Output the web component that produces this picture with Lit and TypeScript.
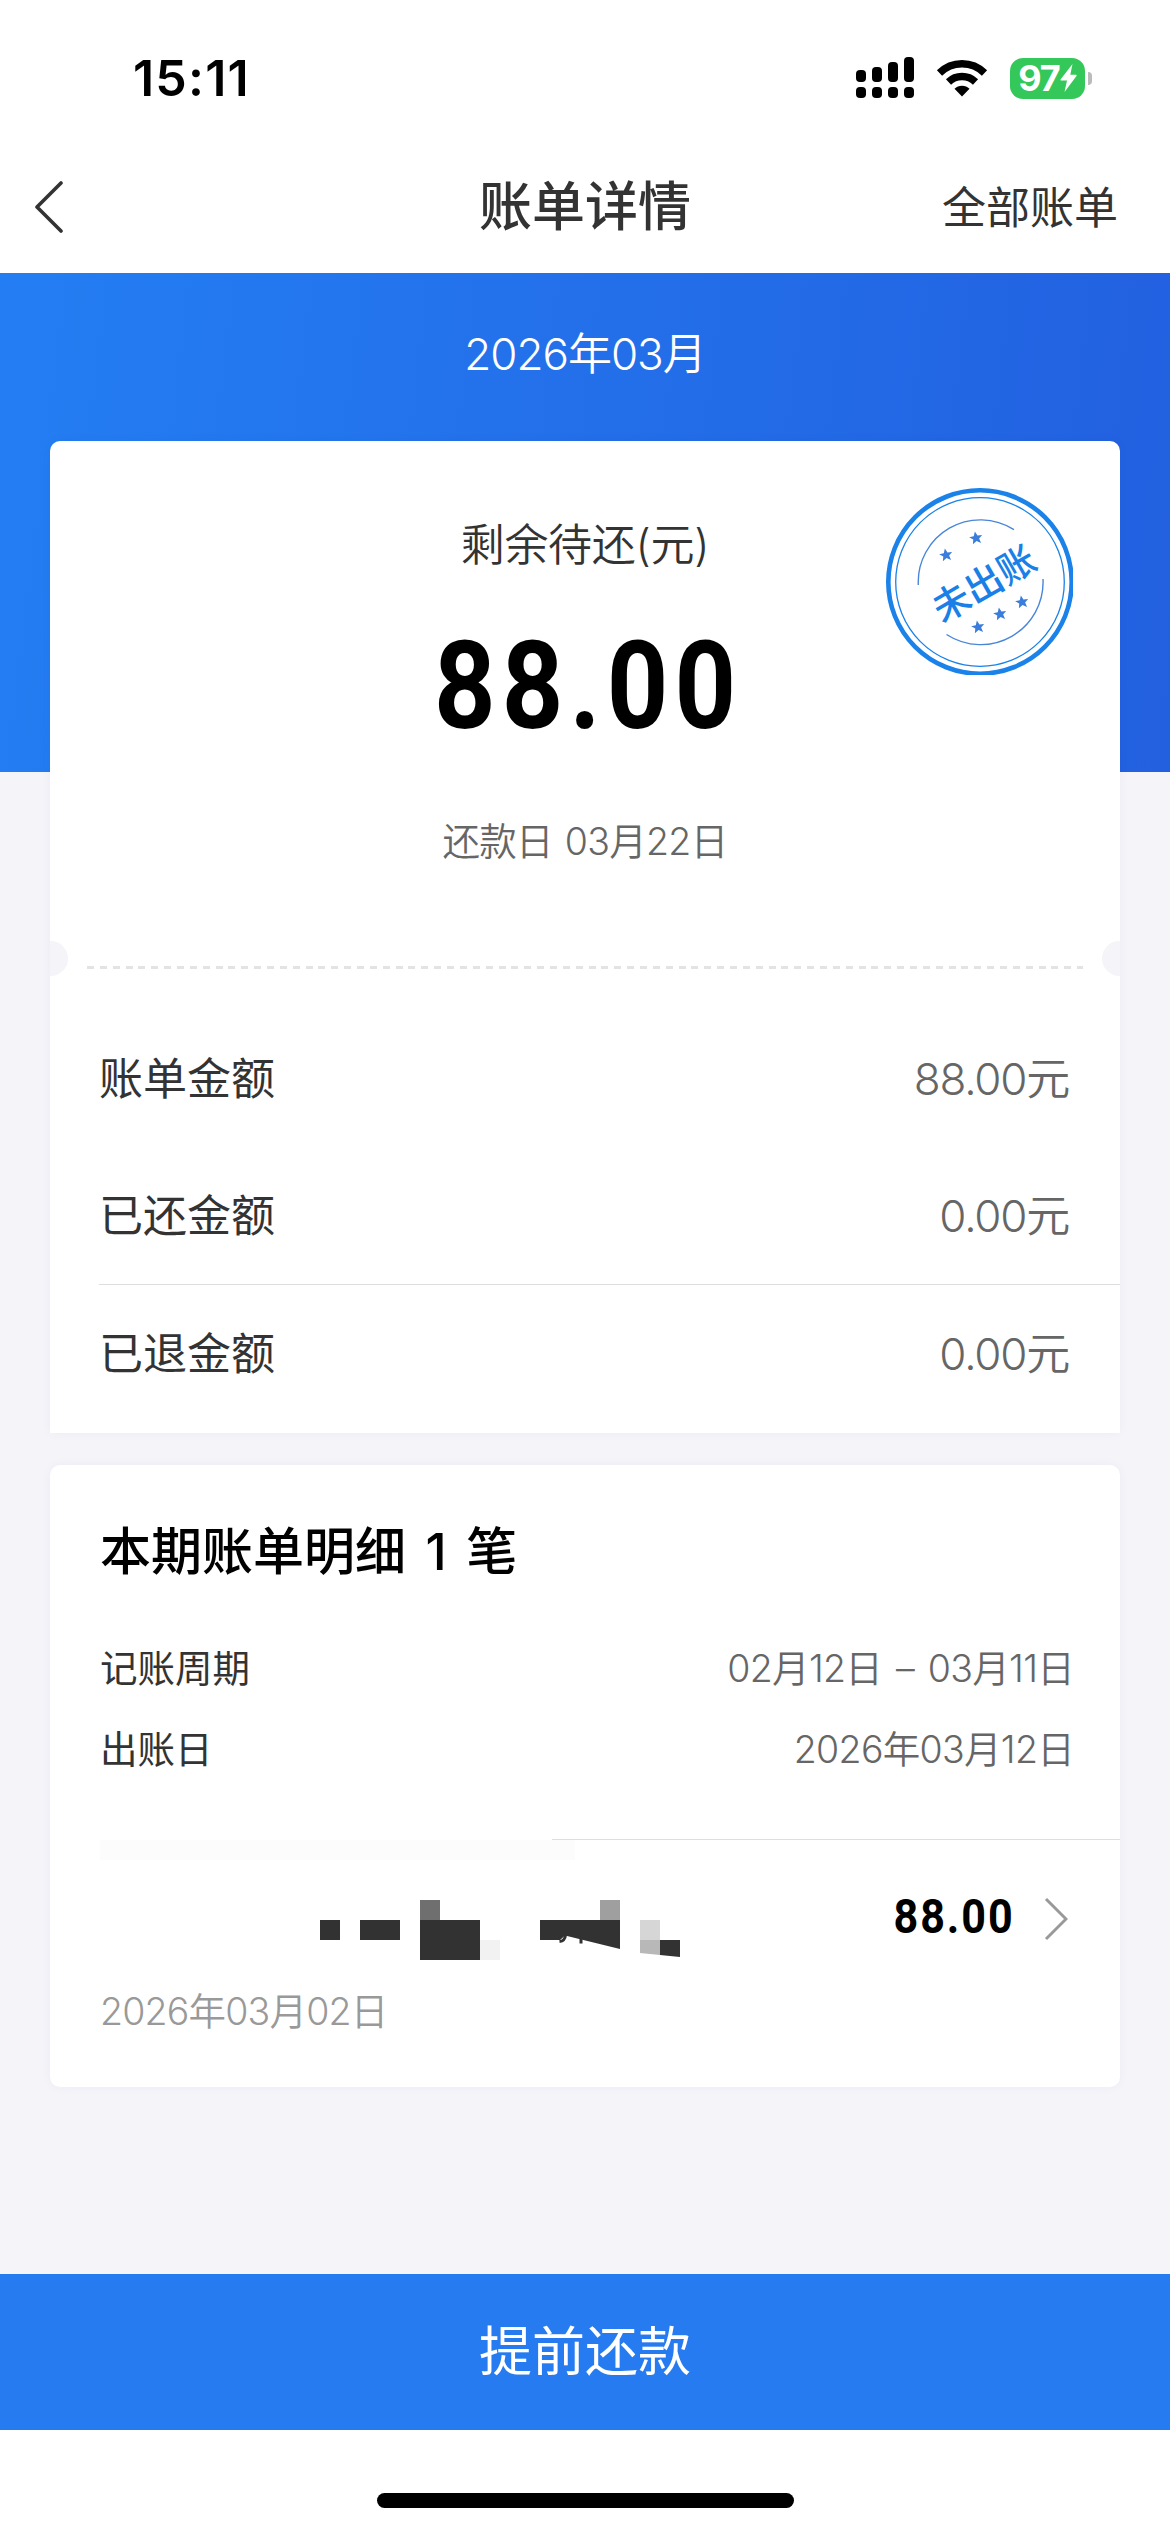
import { LitElement, html, css, svg } from 'lit';
import { customElement } from 'lit/decorators.js';

const STAR =
  'M0 -6 L1.7 -2 L6 -1.8 L2.7 1 L3.8 5.2 L0 2.8 L-3.8 5.2 L-2.7 1 L-6 -1.8 L-1.7 -2 Z';

const stars = [
  [86, 95],
  [116, 78],
  [118, 167],
  [140, 154],
  [162, 142],
];

@customElement('status-bar')
export class StatusBar extends LitElement {
  static styles = css`
    :host {
      display: flex;
      justify-content: space-between;
      align-items: center;
      height: 156px;
      padding: 0 78px 0 133px;
      box-sizing: border-box;
    }

    .time {
      font-size: 50px;
      font-weight: 600;
      letter-spacing: 1.2px;
      color: #000;
    }

    .icons {
      display: flex;
      align-items: center;
    }

    .wifi {
      margin: 0 22px 0 22px;
    }

    .battery {
      display: flex;
      align-items: center;
      justify-content: center;
      width: 75px;
      height: 41px;
      border-radius: 13px;
      background: #34c759;
      color: #fff;
      font-size: 36px;
      font-weight: 700;
      letter-spacing: -1px;
    }

    .cap {
      width: 4px;
      height: 13px;
      margin-left: 3px;
      border-radius: 0 5px 5px 0;
      background: #b9bcb9;
    }
  `;

  render() {
    return html`
      <span class="time">15:11</span>
      <div class="icons">
        <svg width="58" height="42" viewBox="0 0 58 42">
          <rect x="0" y="13" width="10" height="12" rx="4" />
          <rect x="16" y="10" width="10" height="15" rx="4" />
          <rect x="32" y="5" width="10" height="20" rx="4" />
          <rect x="48" y="0" width="10" height="25" rx="4" />
          <rect x="0" y="30" width="10" height="11" rx="4" />
          <rect x="16" y="30" width="10" height="11" rx="4" />
          <rect x="32" y="30" width="10" height="11" rx="4" />
          <rect x="48" y="30" width="10" height="11" rx="4" />
        </svg>
        <svg class="wifi" width="52" height="38" viewBox="0 0 52 38">
          <path
            d="M3.5 14 A32 32 0 0 1 48.5 14 M12.5 23 A19.5 19.5 0 0 1 39.5 23"
            fill="none"
            stroke="#000"
            stroke-width="7.4"
          />
          <path d="M26 37.5 L18.5 29.8 A10.6 10.6 0 0 1 33.5 29.8 Z" />
        </svg>
        <div class="battery">
          <span>97</span>
          <svg width="17" height="28" viewBox="0 0 17 28">
            <path
              d="M12.5 0 L0.5 15.5 Q0 16.6 1.2 16.6 L7 16.6 L4.5 28 L16.5 12 Q17 10.8 15.8 10.8 L10.3 10.8 Z"
              fill="#fff"
            />
          </svg>
        </div>
        <div class="cap"></div>
      </div>
    `;
  }
}

@customElement('bill-stamp')
export class BillStamp extends LitElement {
  static styles = css`
    :host {
      display: block;
    }

    svg {
      display: block;
    }

    text {
      font-family: 'Noto Sans CJK SC', sans-serif;
      font-size: 37.5px;
      font-weight: 500;
    }
  `;

  render() {
    return html`
      <svg width="187" height="187" viewBox="26 28 187 187">
        <g fill="none" stroke="#1a82e8">
          <circle cx="120" cy="122" r="91.7" stroke-width="4.6" />
          <circle cx="120" cy="122" r="84.3" stroke-width="1.3" />
          <path
            d="M58.3 125 A62.2 62.2 0 0 1 154 69.7 M183 119 A62.5 62.5 0 0 1 86.5 174.5"
            stroke="#4a86d8"
            stroke-width="1.4"
          />
        </g>
        <g fill="#3a7ddc">
          ${stars.map(
            ([x, y]) =>
              svg`<path d=${STAR} transform="translate(${x} ${y}) rotate(-10) scale(1.1)" />`
          )}
        </g>
        <text
          x="122.5"
          y="121"
          fill="#1a7fe6"
          text-anchor="middle"
          dominant-baseline="central"
          transform="rotate(-30 122.5 121)"
        >未出账</text>
      </svg>
    `;
  }
}

@customElement('app-root')
export class AppRoot extends LitElement {
  static styles = css`
    :host {
      display: flex;
      flex-direction: column;
      width: 1170px;
      height: 2532px;
      overflow: hidden;
      background: #fff;
      color: #333;
      font-family: Inter, 'Noto Sans CJK SC', sans-serif;
      font-size: 44px;
      line-height: 1;
    }

    .nav {
      display: grid;
      grid-template-columns: 1fr auto 1fr;
      align-items: center;
      height: 117px;
      padding: 0 52px 14px 34px;
      box-sizing: border-box;
    }

    .nav h1 {
      margin: 0 0 0 18px;
      font-size: 53px;
      font-weight: 500;
    }

    .nav .all {
      justify-self: end;
    }

    .main {
      height: 2001px;
      box-sizing: border-box;
      padding: 0 50px;
      background:
        linear-gradient(97deg, #247ef3, #2260e0) 0 0 / 100% 499px no-repeat,
        #f4f4f9;
    }

    .month {
      height: 168px;
      line-height: 162px;
      text-align: center;
      font-weight: 350;
      letter-spacing: -1px;
      color: #fff;
    }

    .card {
      background: #fff;
      box-shadow: 0 0 12px rgba(60, 60, 110, 0.04);
    }

    .summary {
      position: relative;
      display: flex;
      flex-direction: column;
      height: 992px;
      border-radius: 10px 10px 0 0;
    }

    .notch {
      position: absolute;
      top: 500px;
      width: 18px;
      height: 35px;
      background: #f4f4f9;
    }

    .notch.left {
      left: 0;
      border-radius: 0 18px 18px 0;
    }

    .notch.right {
      right: 0;
      border-radius: 18px 0 0 18px;
    }

    .stamp {
      position: absolute;
      top: 47px;
      right: 47px;
    }

    .balance {
      display: flex;
      flex-direction: column;
      align-items: center;
      height: 525px;
      padding-top: 82px;
      box-sizing: border-box;
    }

    .caption {
      font-weight: 350;
      letter-spacing: -0.3px;
    }

    .amount {
      margin: 59px 0 0 6px;
      font-family: Roboto, sans-serif;
      font-size: 122px;
      font-weight: 700;
      letter-spacing: 7px;
      transform: scaleX(0.88);
      color: #000;
    }

    .due {
      margin-top: 75px;
      font-size: 37.5px;
      font-weight: 350;
      letter-spacing: -0.7px;
      word-spacing: 2px;
      color: #666;
    }

    .dashes {
      height: 3px;
      margin: 0 37px;
      background: repeating-linear-gradient(
        90deg,
        #e3e3e3 0 7px,
        transparent 7px 12.86px
      );
    }

    .rows {
      padding: 41px 0 0 49px;
    }

    .row {
      display: flex;
      justify-content: space-between;
      align-items: center;
      height: 137px;
      padding-right: 51px;
    }

    .row + .row + .row {
      border-top: 1px solid #dedee0;
    }

    .value {
      font-weight: 350;
      letter-spacing: -1.2px;
      color: #666;
    }

    .detail {
      height: 622px;
      margin-top: 32px;
      border-radius: 10px;
    }

    .detail h2 {
      margin: 0;
      padding: 61px 0 0 50px;
      font-size: 51px;
      font-weight: 500;
      word-spacing: 6px;
      color: #000;
    }

    .meta {
      display: flex;
      justify-content: space-between;
      align-items: center;
      height: 81px;
      padding: 0 46px 0 50px;
      font-size: 37.5px;
    }

    .meta .value {
      letter-spacing: -0.7px;
      word-spacing: 4px;
    }

    .meta.first {
      margin-top: 51px;
    }

    .line {
      height: 1px;
      margin: 49px 0 0 502px;
      background: #dedee0;
    }

    .smear {
      width: 475px;
      height: 20px;
      margin-left: 50px;
      background: #fcfcfc;
    }

    .item {
      display: flex;
      align-items: center;
      height: 118px;
      padding: 0 52px 0 270px;
    }

    .mosaic {
      margin-top: 22px;
    }

    .item .price {
      margin: -5px 29px 0 auto;
      font-family: Roboto, sans-serif;
      font-size: 49px;
      font-weight: 700;
      letter-spacing: 2.2px;
      transform: scaleX(0.88);
      transform-origin: right;
      color: #000;
    }

    .date {
      padding: 15px 0 0 50px;
      font-size: 37.5px;
      font-weight: 350;
      letter-spacing: -0.8px;
      color: #999;
    }

    .pay {
      flex: none;
      height: 156px;
      border: 0;
      background: #267bf0;
      color: #fff;
      font: inherit;
      font-size: 53px;
    }

    .home {
      width: 417px;
      height: 15px;
      margin: 63px auto 0;
      border-radius: 8px;
      background: #000;
    }
  `;

  render() {
    return html`
      <status-bar></status-bar>
      <header class="nav">
        <svg width="30" height="54" viewBox="0 0 30 54">
          <path
            d="M27 2 L3 26 L27 50"
            fill="none"
            stroke="#333"
            stroke-width="3.6"
            stroke-linecap="round"
            stroke-linejoin="round"
          />
        </svg>
        <h1>账单详情</h1>
        <span class="all">全部账单</span>
      </header>

      <main class="main">
        <div class="month">2026年03月</div>

        <section class="card summary">
          <div class="balance">
            <div class="caption">剩余待还(元)</div>
            <div class="amount">88.00</div>
            <div class="due">还款日 03月22日</div>
          </div>
          <div class="dashes"></div>
          <div class="rows">
            <div class="row">
              <span>账单金额</span><span class="value">88.00元</span>
            </div>
            <div class="row">
              <span>已还金额</span><span class="value">0.00元</span>
            </div>
            <div class="row">
              <span>已退金额</span><span class="value">0.00元</span>
            </div>
          </div>
          <div class="notch left"></div>
          <div class="notch right"></div>
          <bill-stamp class="stamp"></bill-stamp>
        </section>

        <section class="card detail">
          <h2>本期账单明细 1 笔</h2>
          <div class="meta first">
            <span>记账周期</span><span class="value">02月12日 – 03月11日</span>
          </div>
          <div class="meta">
            <span>出账日</span><span class="value">2026年03月12日</span>
          </div>
          <div class="line"></div>
          <div class="smear"></div>
          <div class="item">
            <svg
              class="mosaic"
              width="360"
              height="60"
              viewBox="0 0 360 60"
              fill="#323232"
            >
              <path d="M0 20h20v20H0z M40 20h40v20H40z M100 20h60v40H100z" />
              <path d="M220 20h80v29L245 35.5L240 40H220z" />
              <path d="M340 40h20v17L340 55z" />
              <path d="M100 0h20v20H100z" fill="#6f6f6f" />
              <path d="M160 40h20v20H160z" fill="#f2f2f2" />
              <path d="M280 0h20v20H280z" fill="#9f9f9f" />
              <path d="M320 20h20v20H320z" fill="#d6d6d6" />
              <path d="M320 40h20v15L320 53z" fill="#b8b8b8" />
              <path
                d="M245.5 35 Q245 41 239.5 41.5 M261 38v5.5"
                fill="none"
                stroke="#323232"
                stroke-width="3"
              />
            </svg>
            <span class="price">88.00</span>
            <svg width="24" height="44" viewBox="0 0 24 44">
              <path
                d="M2 2 L22 22 L2 42"
                fill="none"
                stroke="#999"
                stroke-width="3"
              />
            </svg>
          </div>
          <div class="date">2026年03月02日</div>
        </section>
      </main>

      <button class="pay">提前还款</button>
      <div class="home"></div>
    `;
  }
}

declare global {
  interface HTMLElementTagNameMap {
    'app-root': AppRoot;
    'bill-stamp': BillStamp;
    'status-bar': StatusBar;
  }
}
